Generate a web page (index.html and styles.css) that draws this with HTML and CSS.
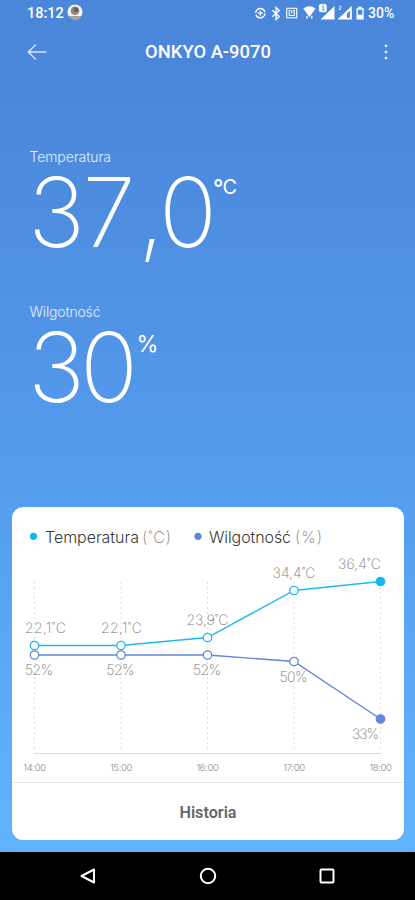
FILE: index.html
```
<!DOCTYPE html>
<html lang="pl">
<head>
<meta charset="utf-8">
<title>ONKYO A-9070</title>
<link rel="stylesheet" href="styles.css">
</head>
<body>
<main class="screen">
  <div class="status">
    <span class="clock">18:12</span>
    <svg class="avatar" width="16" height="16" viewBox="0 0 16 16"><circle cx="8" cy="8" r="7.6" fill="#f4f3ef"/><path d="M1.5 12h13A7.6 7.6 0 0 1 1.500 12z" fill="#a9a49a"/><circle cx="8" cy="6.800" r="4.300" fill="#8c8880"/><circle cx="9" cy="5.700" r="2.200" fill="#5f605e"/></svg>
    <svg class="indicators" width="113" height="24" viewBox="253 0 113 24" fill="none" stroke="#fff">
      <circle cx="260.3" cy="12.2" r="4.6" stroke-width="1.5" stroke-dasharray="12.5 1.95"/>
      <path d="M260.3 9.700v5M257.8 12.200h5" stroke-width="1.2"/>
      <path d="M272.300 9.300l7 6.200-3.300 3V6.500l3.300 3-7 6.200" stroke-width="1.300"/>
      <rect x="286.700" y="7.300" width="10" height="9.500" stroke-width="1.100"/>
      <path d="M290.500 9.500h-1.300v5h5v-5h-1.400M291.700 9.500v3" stroke-width="1.100"/>
      <path d="M303.200 7.500q6.200-4.500 12.400 0l-6.200 8.500z" fill="#fff" stroke="none"/>
      <path d="M307 14.800v3M311.800 14.800v3" stroke-width="1.300"/>
      <path d="M334.500 5v13.500H320.500z" fill="#fff" stroke="none"/>
      <rect x="318.700" y="2.800" width="8.300" height="8.600" rx="2" fill="#fff" stroke="#4a86da" stroke-width=".6"/>
      <path d="M322 5.500l1.200-.6v4M321.800 9h2.800" stroke="#4a86da" stroke-width=".9"/>
      <path d="M351.800 5v13.500H337.500z" fill="#fff" stroke="none"/>
      <path d="M350 9.500v7.300h-3.200v-3.800z" fill="#4a86da" stroke="none"/>
      <path d="M339 5.200h1.800v1.500l-1.800 1.600h2" stroke-width=".8"/>
      <path d="M357.200 8h5.800v9.700h-5.800z" stroke-width="1.400"/>
      <path d="M358.300 5.800h3.600v2h-3.600zM357.200 13.800h5.800v4h-5.800z" fill="#fff" stroke="none"/>
    </svg>
    <span class="battery">30%</span>
  </div>
  <header class="bar">
    <svg width="20" height="16" viewBox="0 0 20 16" fill="none" stroke="#dceafc" stroke-width="1.300"><path d="M19.500 8H1.200M8.800.5L1.200 8l7.600 7.500"/></svg>
    <h1>ONKYO A-9070</h1>
    <svg width="4" height="16" viewBox="0 0 4 16" fill="#e6effb"><circle cx="2" cy="1.800" r="1.400"/><circle cx="2" cy="8" r="1.400"/><circle cx="2" cy="14.100" r="1.400"/></svg>
  </header>
  <section class="reading">
    <svg width="240" height="125" viewBox="20 147 240 125">
      <text class="label" x="29.500" y="162" textLength="81.500">Temperatura</text>
      <text class="num" x="28 82.500 138 159" y="246.500">37,0</text>
      <text class="unit" y="193.500"><tspan class="degree" x="213" y="195.500">°</tspan><tspan x="222.500" y="193.500">C</tspan></text>
    </svg>
  </section>
  <section class="reading">
    <svg width="240" height="125" viewBox="20 147 240 125">
      <text class="label" x="29.500" y="162" textLength="71">Wilgotność</text>
      <text class="num" x="28 80" y="246.500">30</text>
      <text class="unit percent" x="136.500" y="196.500" textLength="22" lengthAdjust="spacingAndGlyphs">%</text>
    </svg>
  </section>
  <section class="card">
    <svg class="chart" width="392" height="275" viewBox="12 507 392 275">
      <circle cx="33.500" cy="536.300" r="3.600" fill="#0eb8f1"/>
      <circle cx="198" cy="536.300" r="3.600" fill="#5d86dd"/>
      <g class="legend">
        <text x="45" y="543" textLength="94">Temperatura</text><text class="soft" x="142" y="543" textLength="29">(˚C)</text>
        <text x="209" y="543" textLength="82">Wilgotność</text><text class="soft" x="295" y="543" textLength="27">(%)</text>
      </g>
      <path class="grid" d="M34.500 582v170M121 582v170M207.500 582v170M294 582v170M380.500 582v170"/>
      <path class="axis" d="M34 753.500h347"/>
      <g class="labels">
        <text x="25" y="633" textLength="41">22,1˚C</text><text x="101" y="633" textLength="41">22,1˚C</text><text x="186.500" y="625" textLength="42">23,9˚C</text><text x="272.500" y="578" textLength="43">34,4˚C</text><text x="338" y="569" textLength="43">36,4˚C</text>
        <text x="25" y="675" textLength="28">52%</text><text x="106.500" y="675" textLength="28">52%</text><text x="193" y="675" textLength="28">52%</text><text x="279.500" y="681.500" textLength="28">50%</text><text x="352" y="739" textLength="27">33%</text>
      </g>
      <g class="temp-line"><path d="M34.500 645.500H121L207.500 637.500 294 590.500 380.500 581.500"/><circle cx="34.500" cy="645.500" r="4.200"/><circle cx="121" cy="645.500" r="4.200"/><circle cx="207.500" cy="637.500" r="4.200"/><circle cx="294" cy="590.500" r="4.200"/><circle class="last" cx="380.500" cy="581.500" r="4.200"/></g>
      <g class="hum-line"><path d="M34.500 655H207.500L294 661.500 380.500 719"/><circle cx="34.500" cy="655" r="4.200"/><circle cx="121" cy="655" r="4.200"/><circle cx="207.500" cy="655" r="4.200"/><circle cx="294" cy="661.500" r="4.200"/><circle class="last" cx="380.500" cy="719" r="4.200"/></g>
      <g class="times"><text x="34.500" y="770.500">14:00</text><text x="121" y="770.500">15:00</text><text x="207.500" y="770.500">16:00</text><text x="294" y="770.500">17:00</text><text x="380.500" y="770.500">18:00</text></g>
    </svg>
    <div class="history">Historia</div>
  </section>
  <nav class="nav">
    <svg width="18" height="18" viewBox="0 0 18 18"><path d="M15 2.500v13L2.500 9z"/></svg>
    <svg width="18" height="18" viewBox="0 0 18 18"><circle cx="9" cy="9" r="7.200"/></svg>
    <svg width="18" height="18" viewBox="0 0 18 18"><rect x="2.500" y="2.500" width="13" height="13" rx="1"/></svg>
  </nav>
</main>
</body>
</html>
```
FILE: styles.css
```
* { box-sizing: border-box; }
body { margin: 0; font-family: Roboto, sans-serif; color: #fff; }
h1 { margin: 0; }
.screen { width: 415px; height: 900px; display: flex; flex-direction: column; overflow: hidden; background: linear-gradient(#4a86da, #4a87db 90px, #559ced 480px, #60b3fe 840px); }
.status { height: 25px; display: flex; align-items: center; padding: 0 20px 0 27px; font-size: 14.5px; font-weight: 500; }
.clock { width: 40px; padding-top: 2px; }
.avatar { margin-top: -1px; }
.indicators { margin-left: auto; }
.battery { width: 29px; font-size: 14px; padding: 1px 0 0 2px; white-space: nowrap; }
.bar { height: 53px; display: flex; align-items: center; justify-content: space-between; padding: 0 27px; }
.bar h1 { font-size: 18.4px; line-height: 24px; font-weight: 500; margin-left: -15px; }
.reading { height: 154.5px; padding-left: 20px; }
.bar + .reading { margin-top: 69px; }
.reading svg { display: block; fill: #fff; overflow: visible; }
.label { font: 300 14px Inter, sans-serif; fill: #e4effc; }
.num { font: 225 96px Inter, sans-serif; }
.unit { font: 400 20px Inter, sans-serif; }
.degree { font-size: 23px; font-weight: 500; }
.percent { font-size: 22.5px; }
.card { width: 392px; height: 333px; margin: 51px 0 0 12px; border-radius: 11px; background: #fff; }
.chart { display: block; }
.legend { font: 300 16px Inter, sans-serif; fill: #383838; }
.soft { fill: #777; font-weight: 200; }
.grid { stroke: #dedede; stroke-width: 1; stroke-dasharray: 2 3; }
.axis { stroke: #ddd; }
.labels { font: 200 14px Inter, sans-serif; fill: #777; }
.times { font: 300 9.5px Inter, sans-serif; fill: #888; text-anchor: middle; letter-spacing: -.35px; }
.temp-line path, .hum-line path { fill: none; stroke-width: 1.4; }
.temp-line { stroke: #20b9ed; fill: #fff; }
.hum-line { stroke: #6386d9; fill: #fff; }
.temp-line circle, .hum-line circle { stroke-width: 1.3; }
.temp-line .last { fill: #08b7fc; }
.hum-line .last { fill: #5d86e5; }
.history { height: 58px; border-top: 1px solid #eaeaea; padding-top: 1px; display: flex; align-items: center; justify-content: center; font-size: 16.2px; font-weight: 600; color: #666; }
.nav { height: 48px; margin-top: auto; background: #000; display: flex; justify-content: space-between; align-items: center; padding: 0 79px; fill: none; stroke: #fff; stroke-width: 2; stroke-linejoin: round; }
```
